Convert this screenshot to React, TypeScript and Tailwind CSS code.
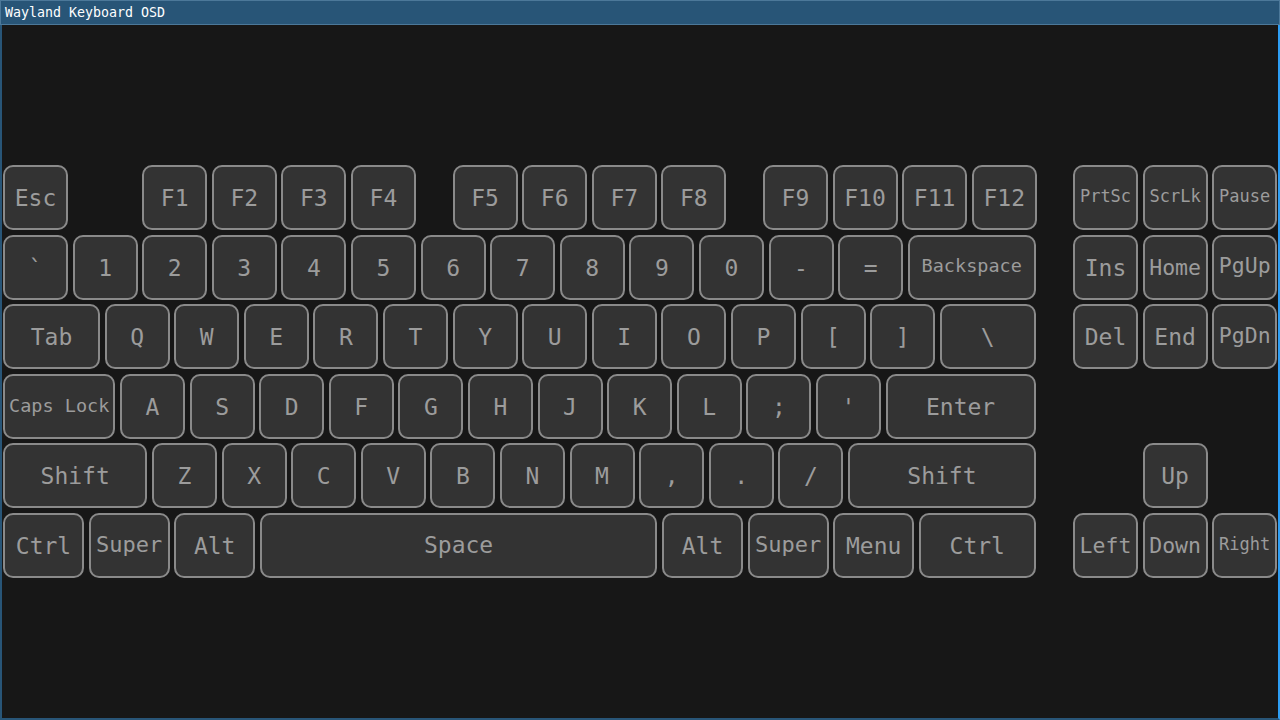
import React from 'react';

type K = { l: string; w?: string; t?: string; ml?: string };

const small = 'text-[17px] pb-[2px]';
const mid = 'text-[21.5px]';
const wide = 'text-[18.5px]';

const keyRows: K[][] = [
  [
    { l: 'Esc' },
    { l: 'F1', ml: 'ml-[69.6px]' }, { l: 'F2' }, { l: 'F3' }, { l: 'F4' },
    { l: 'F5', ml: 'ml-[32px]' }, { l: 'F6' }, { l: 'F7' }, { l: 'F8' },
    { l: 'F9', ml: 'ml-[32px]' }, { l: 'F10' }, { l: 'F11' }, { l: 'F12' },
  ],
  [
    { l: '`' }, { l: '1' }, { l: '2' }, { l: '3' }, { l: '4' }, { l: '5' }, { l: '6' },
    { l: '7' }, { l: '8' }, { l: '9' }, { l: '0' }, { l: '-' }, { l: '=' },
    { l: 'Backspace', w: 'w-[128px]', t: wide + ' pb-[2px]' },
  ],
  [
    { l: 'Tab', w: 'w-[97px]' },
    { l: 'Q' }, { l: 'W' }, { l: 'E' }, { l: 'R' }, { l: 'T' }, { l: 'Y' }, { l: 'U' },
    { l: 'I' }, { l: 'O' }, { l: 'P' }, { l: '[' }, { l: ']' },
    { l: '\\', w: 'w-[96px]' },
  ],
  [
    { l: 'Caps Lock', w: 'w-[112.4px]', t: wide },
    { l: 'A' }, { l: 'S' }, { l: 'D' }, { l: 'F' }, { l: 'G' }, { l: 'H' }, { l: 'J' },
    { l: 'K' }, { l: 'L' }, { l: ';' }, { l: "'" },
    { l: 'Enter', w: 'w-[150.2px]' },
  ],
  [
    { l: 'Shift', w: 'w-[144.4px]' },
    { l: 'Z' }, { l: 'X' }, { l: 'C' }, { l: 'V' }, { l: 'B' }, { l: 'N' }, { l: 'M' },
    { l: ',' }, { l: '.' }, { l: '/' },
    { l: 'Shift', w: 'w-[188px]' },
  ],
  [
    { l: 'Ctrl', w: 'w-[81px]' },
    { l: 'Super', w: 'w-[81px]', t: 'text-[22px] pb-[1px]' },
    { l: 'Alt', w: 'w-[81px]' },
    { l: 'Space', w: 'w-[397.6px]', t: 'text-[23px]' },
    { l: 'Alt', w: 'w-[81px]' },
    { l: 'Super', w: 'w-[81px]', t: 'text-[22px] pb-[1px]' },
    { l: 'Menu', w: 'w-[81px]' },
    { l: 'Ctrl', w: 'w-[117px]' },
  ],
];

const navKeys: { l: string; t?: string; pos: string }[] = [
  { l: 'PrtSc', t: small, pos: 'col-start-1 row-start-1' },
  { l: 'ScrLk', t: small, pos: 'col-start-2 row-start-1' },
  { l: 'Pause', t: small, pos: 'col-start-3 row-start-1' },
  { l: 'Ins', pos: 'col-start-1 row-start-2' },
  { l: 'Home', t: mid + ' pt-[1px]', pos: 'col-start-2 row-start-2' },
  { l: 'PgUp', t: mid + ' pb-[2px]', pos: 'col-start-3 row-start-2' },
  { l: 'Del', pos: 'col-start-1 row-start-3' },
  { l: 'End', pos: 'col-start-2 row-start-3' },
  { l: 'PgDn', t: mid + ' pb-[2px]', pos: 'col-start-3 row-start-3' },
  { l: 'Up', pos: 'col-start-2 row-start-5' },
  { l: 'Left', t: mid + ' pt-[1px]', pos: 'col-start-1 row-start-6' },
  { l: 'Down', t: mid + ' pt-[1px]', pos: 'col-start-2 row-start-6' },
  { l: 'Right', t: small, pos: 'col-start-3 row-start-6' },
];

const keyBase =
  'h-[65px] shrink-0 flex items-center justify-center rounded-[10px] border-2 border-[#8a8a8a] bg-[#333333] text-[#9c9c9c] leading-none whitespace-pre';

function Key({ k }: { k: K }) {
  return (
    <div className={`${keyBase} ${k.w ?? 'w-[65px]'} ${k.t ?? 'text-[23px] pt-[2px]'} ${k.ml ?? ''}`}>
      {k.l}
    </div>
  );
}

export default function App() {
  return (
    <div
      className="w-[1280px] h-[720px] flex flex-col overflow-hidden bg-[#171717]"
      style={{ fontFamily: '"DejaVu Sans Mono", "Liberation Mono", monospace' }}
    >
      {/* Title bar */}
      <div className="h-[25px] shrink-0 flex items-center px-[4px] bg-[#285577] border border-[#4c7899] text-white text-[13.3px] leading-none">
        Wayland Keyboard OSD
      </div>

      {/* Window body */}
      <div className="flex-1 flex items-center pl-[1px] border-l-2 border-b-2 border-l-[#285577] border-b-[#285577] border-r-2 border-r-[#2e9ef4] bg-[#171717]">
        <div className="flex gap-[37px]">
          {/* Main block */}
          <div className="flex flex-col gap-[4.6px] w-[1033px]">
            {keyRows.map((row, i) => (
              <div key={i} className="flex gap-[4.6px]">
                {row.map((k, j) => (
                  <Key key={j} k={k} />
                ))}
              </div>
            ))}
          </div>

          {/* Navigation cluster */}
          <div className="grid grid-cols-[repeat(3,65px)] grid-rows-[repeat(6,65px)] gap-[4.6px]">
            {navKeys.map((k) => (
              <div key={k.l} className={`${keyBase} w-[65px] ${k.t ?? 'text-[23px] pt-[2px]'} ${k.pos}`}>
                {k.l}
              </div>
            ))}
          </div>
        </div>
      </div>
    </div>
  );
}
